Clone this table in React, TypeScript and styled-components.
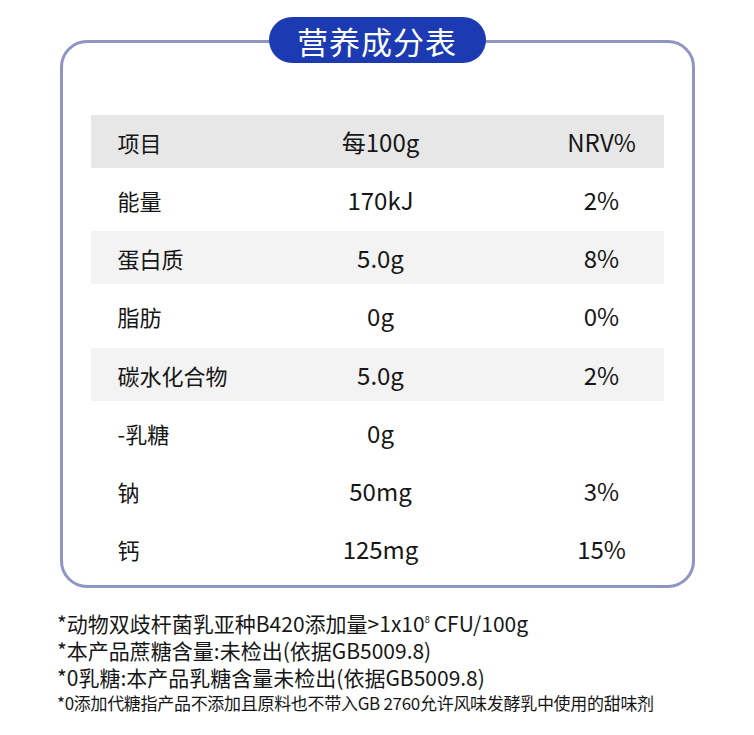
import React from 'react';
import styled, { createGlobalStyle } from 'styled-components';

const Global = createGlobalStyle`
  html, body { margin: 0; padding: 0; background: #ffffff; }
  body {
    font-family: "Noto Sans CJK SC", "Noto Sans", sans-serif;
    color: #161616;
  }
`;

const Page = styled.div`
  width: 754px;
  height: 735px;
  box-sizing: border-box;
  padding-top: 40px;
  overflow: hidden;
  display: flex;
  flex-direction: column;
  align-items: center;
`;

const Card = styled.section`
  width: 635px;
  box-sizing: border-box;
  border: 3px solid #8f95c3;
  border-radius: 27px;
  padding: 0 28px 10px;
  display: flex;
  flex-direction: column;
`;

const Badge = styled.h1`
  margin: -26px auto 0;
  width: 217px;
  height: 46px;
  border-radius: 23px;
  background: #1c3bb2;
  color: #ffffff;
  font-size: 31px;
  font-weight: 400;
  letter-spacing: 1px;
  display: flex;
  align-items: center;
  justify-content: center;
  line-height: 1;
`;

const Table = styled.div`
  margin-top: 52px;
  display: flex;
  flex-direction: column;
  gap: 5.15px;
`;

type Shade = 'head' | 'alt' | 'none';

const shadeColor: Record<Shade, string> = {
  head: '#e7e7e7',
  alt: '#f3f3f3',
  none: 'transparent',
};

const Row = styled.div<{ $shade: Shade }>`
  height: 53px;
  display: grid;
  grid-template-columns: 210px 160px 1fr;
  align-items: center;
  background: ${(p) => shadeColor[p.$shade]};
  padding-top: 1px;
  box-sizing: border-box;
`;

const Label = styled.div`
  padding-left: 27px;
  font-size: 22px;
  line-height: 1;
`;

const Value = styled.div`
  text-align: center;
  font-size: 24px;
  line-height: 1;
`;

const Nrv = styled(Value)`
  padding-left: 79px;
`;

const Notes = styled.div`
  align-self: stretch;
  padding-left: 57px;
  margin-top: 18px;
  display: flex;
  flex-direction: column;
`;

const Note = styled.p<{ $small?: boolean }>`
  margin: 0;
  font-size: ${(p) => (p.$small ? '17px' : '21px')};
  line-height: ${(p) => (p.$small ? '24px' : '27px')};
  white-space: nowrap;
  letter-spacing: ${(p) => (p.$small ? '-0.3px' : '0')};
`;

const Sup = styled.sup`
  font-size: 9px;
  vertical-align: 9px;
  margin-right: 4px;
`;

const rows: { name: string; value: string; nrv: string }[] = [
  { name: '能量', value: '170kJ', nrv: '2%' },
  { name: '蛋白质', value: '5.0g', nrv: '8%' },
  { name: '脂肪', value: '0g', nrv: '0%' },
  { name: '碳水化合物', value: '5.0g', nrv: '2%' },
  { name: '-乳糖', value: '0g', nrv: '' },
  { name: '钠', value: '50mg', nrv: '3%' },
  { name: '钙', value: '125mg', nrv: '15%' },
];

export default function App() {
  return (
    <>
      <Global />
      <Page>
        <Card>
          <Badge>营养成分表</Badge>
          <Table>
            <Row $shade="head">
              <Label>项目</Label>
              <Value>每100g</Value>
              <Nrv>NRV%</Nrv>
            </Row>
            {rows.map((r, i) => (
              <Row key={r.name} $shade={i % 2 === 1 && i < 4 ? 'alt' : 'none'}>
                <Label>{r.name}</Label>
                <Value>{r.value}</Value>
                <Nrv>{r.nrv}</Nrv>
              </Row>
            ))}
          </Table>
        </Card>
        <Notes>
          <Note>
            *动物双歧杆菌乳亚种B420添加量&gt;1x10<Sup>8</Sup>CFU/100g
          </Note>
          <Note>*本产品蔗糖含量:未检出(依据GB5009.8)</Note>
          <Note>*0乳糖:本产品乳糖含量未检出(依据GB5009.8)</Note>
          <Note $small>*0添加代糖指产品不添加且原料也不带入GB 2760允许风味发酵乳中使用的甜味剂</Note>
        </Notes>
      </Page>
    </>
  );
}
